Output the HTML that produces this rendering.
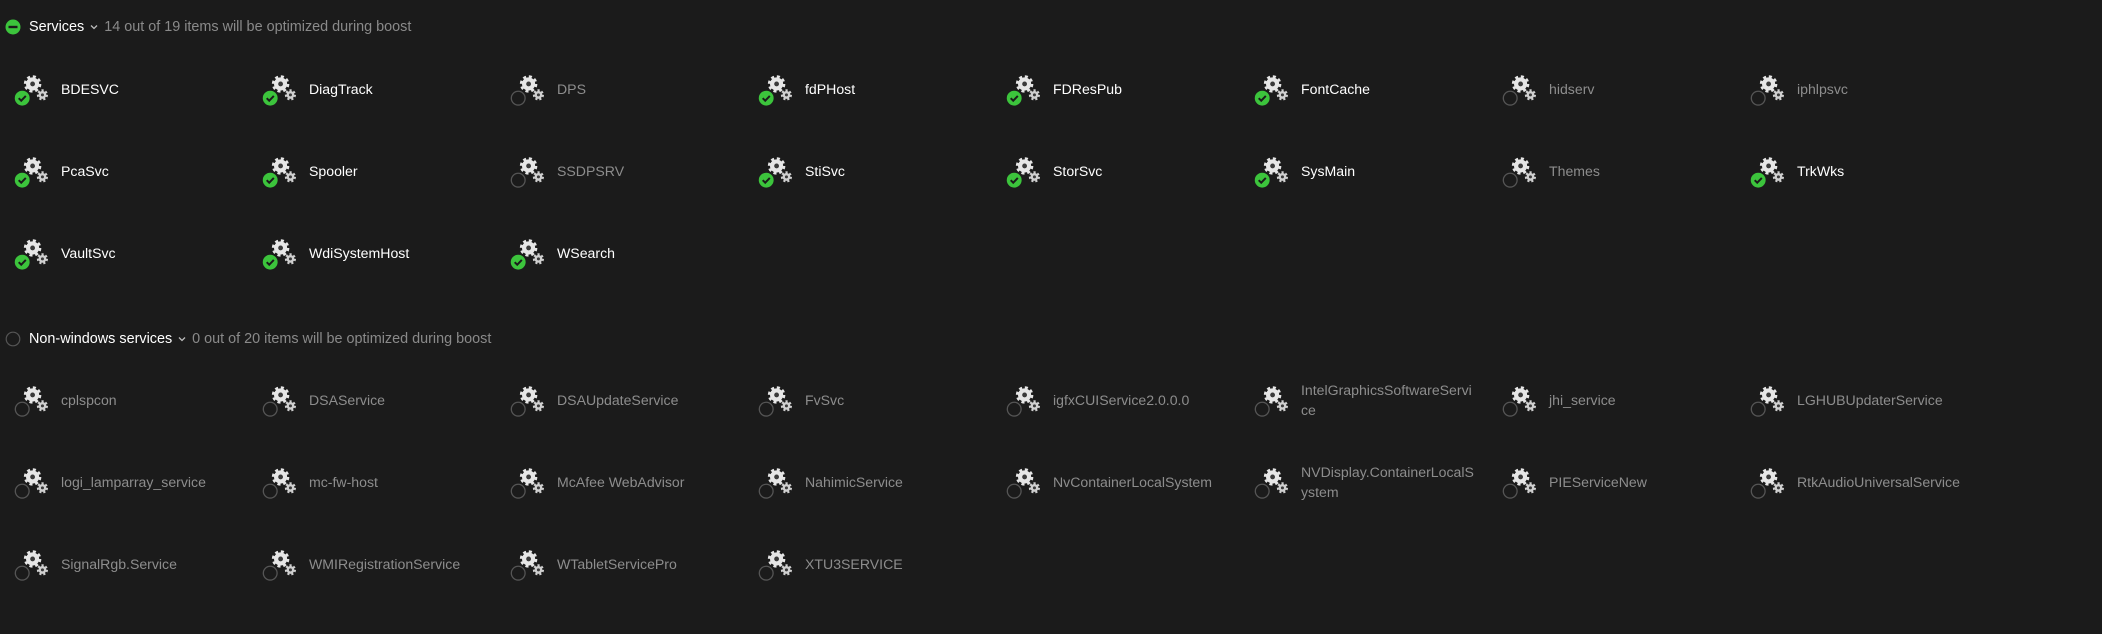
<!DOCTYPE html><html><head><meta charset="utf-8"><style>
body{margin:0;width:2102px;height:634px;background:#1b1b1b;font-family:"Liberation Sans",sans-serif;position:relative;overflow:hidden}
.h{position:absolute;left:5px;font-size:14.4px;color:#fff;display:flex;align-items:center;white-space:nowrap}
.h .s{color:#8a8a8a;margin-left:6px}
.h .c{margin-left:6px}
.i{position:absolute;width:248px;height:40px}
.i svg{position:absolute;left:14px;top:-15px}
.i span{position:absolute;left:61px;top:-10px;font-size:14.1px;line-height:20px;width:200px;white-space:nowrap;color:#fff}
.i.off span{color:#8d8d8d}
</style></head><body>
<svg width="0" height="0" style="position:absolute"><defs>
<symbol id="g" viewBox="0 0 32 30">
<circle cx="17" cy="9" r="6.3" fill="none" stroke="#e6e6e6" stroke-width="3.4" stroke-dasharray="2.6 2.35"/>
<circle cx="17" cy="9" r="6" fill="#e6e6e6"/><circle cx="17" cy="9" r="2.2" fill="#3a3a3a"/>
<circle cx="26" cy="19" r="3.8" fill="none" stroke="#d0d0d0" stroke-width="2.6" stroke-dasharray="1.8 1.6"/>
<circle cx="26" cy="19" r="3.6" fill="#d0d0d0"/><circle cx="26" cy="19" r="1.4" fill="#3a3a3a"/>
</symbol>
<symbol id="on" viewBox="0 0 32 30"><use href="#g"/><circle cx="7.5" cy="22" r="6.8" fill="#3cc43c"/><path d="M4.3 22l2.3 2.3 4.2-4.3" fill="none" stroke="#1b1b1b" stroke-width="1.8"/></symbol>
<symbol id="off" viewBox="0 0 32 30"><use href="#g"/><circle cx="7.5" cy="22" r="6.3" fill="#1b1b1b" stroke="#555" stroke-width="1.2"/></symbol>
</defs></svg>

<div class="h" style="top:19px"><svg width="16" height="16"><circle cx="8" cy="8" r="7.5" fill="#3cc43c"/><rect x="3.5" y="6.8" width="9" height="2.4" fill="#1b1b1b"/></svg><span style="margin-left:8px">Services</span><svg class="c" width="8" height="6"><path d="M1 1.5l3 3 3-3" fill="none" stroke="#bbb" stroke-width="1.3"/></svg><span class="s">14 out of 19 items will be optimized during boost</span></div>

<div class="i" style="left:0;top:89px"><svg width="35" height="33"><use href="#on"/></svg><span>BDESVC</span></div>
<div class="i" style="left:248px;top:89px"><svg width="35" height="33"><use href="#on"/></svg><span>DiagTrack</span></div>
<div class="i off" style="left:496px;top:89px"><svg width="35" height="33"><use href="#off"/></svg><span>DPS</span></div>
<div class="i" style="left:744px;top:89px"><svg width="35" height="33"><use href="#on"/></svg><span>fdPHost</span></div>
<div class="i" style="left:992px;top:89px"><svg width="35" height="33"><use href="#on"/></svg><span>FDResPub</span></div>
<div class="i" style="left:1240px;top:89px"><svg width="35" height="33"><use href="#on"/></svg><span>FontCache</span></div>
<div class="i off" style="left:1488px;top:89px"><svg width="35" height="33"><use href="#off"/></svg><span>hidserv</span></div>
<div class="i off" style="left:1736px;top:89px"><svg width="35" height="33"><use href="#off"/></svg><span>iphlpsvc</span></div>

<div class="i" style="left:0;top:171px"><svg width="35" height="33"><use href="#on"/></svg><span>PcaSvc</span></div>
<div class="i" style="left:248px;top:171px"><svg width="35" height="33"><use href="#on"/></svg><span>Spooler</span></div>
<div class="i off" style="left:496px;top:171px"><svg width="35" height="33"><use href="#off"/></svg><span>SSDPSRV</span></div>
<div class="i" style="left:744px;top:171px"><svg width="35" height="33"><use href="#on"/></svg><span>StiSvc</span></div>
<div class="i" style="left:992px;top:171px"><svg width="35" height="33"><use href="#on"/></svg><span>StorSvc</span></div>
<div class="i" style="left:1240px;top:171px"><svg width="35" height="33"><use href="#on"/></svg><span>SysMain</span></div>
<div class="i off" style="left:1488px;top:171px"><svg width="35" height="33"><use href="#off"/></svg><span>Themes</span></div>
<div class="i" style="left:1736px;top:171px"><svg width="35" height="33"><use href="#on"/></svg><span>TrkWks</span></div>

<div class="i" style="left:0;top:253px"><svg width="35" height="33"><use href="#on"/></svg><span>VaultSvc</span></div>
<div class="i" style="left:248px;top:253px"><svg width="35" height="33"><use href="#on"/></svg><span>WdiSystemHost</span></div>
<div class="i" style="left:496px;top:253px"><svg width="35" height="33"><use href="#on"/></svg><span>WSearch</span></div>

<div class="h" style="top:331px"><svg width="16" height="16"><circle cx="8" cy="8" r="6.8" fill="none" stroke="#555" stroke-width="1.2"/></svg><span style="margin-left:8px">Non-windows services</span><svg class="c" width="8" height="6"><path d="M1 1.5l3 3 3-3" fill="none" stroke="#bbb" stroke-width="1.3"/></svg><span class="s">0 out of 20 items will be optimized during boost</span></div>

<div class="i off" style="left:0;top:400px"><svg width="35" height="33"><use href="#off"/></svg><span>cplspcon</span></div>
<div class="i off" style="left:248px;top:400px"><svg width="35" height="33"><use href="#off"/></svg><span>DSAService</span></div>
<div class="i off" style="left:496px;top:400px"><svg width="35" height="33"><use href="#off"/></svg><span>DSAUpdateService</span></div>
<div class="i off" style="left:744px;top:400px"><svg width="35" height="33"><use href="#off"/></svg><span>FvSvc</span></div>
<div class="i off" style="left:992px;top:400px"><svg width="35" height="33"><use href="#off"/></svg><span>igfxCUIService2.0.0.0</span></div>
<div class="i off" style="left:1240px;top:400px"><svg width="35" height="33"><use href="#off"/></svg><span style="top:-20px">IntelGraphicsSoftwareServi<br>ce</span></div>
<div class="i off" style="left:1488px;top:400px"><svg width="35" height="33"><use href="#off"/></svg><span>jhi_service</span></div>
<div class="i off" style="left:1736px;top:400px"><svg width="35" height="33"><use href="#off"/></svg><span>LGHUBUpdaterService</span></div>

<div class="i off" style="left:0;top:482px"><svg width="35" height="33"><use href="#off"/></svg><span>logi_lamparray_service</span></div>
<div class="i off" style="left:248px;top:482px"><svg width="35" height="33"><use href="#off"/></svg><span>mc-fw-host</span></div>
<div class="i off" style="left:496px;top:482px"><svg width="35" height="33"><use href="#off"/></svg><span>McAfee WebAdvisor</span></div>
<div class="i off" style="left:744px;top:482px"><svg width="35" height="33"><use href="#off"/></svg><span>NahimicService</span></div>
<div class="i off" style="left:992px;top:482px"><svg width="35" height="33"><use href="#off"/></svg><span>NvContainerLocalSystem</span></div>
<div class="i off" style="left:1240px;top:482px"><svg width="35" height="33"><use href="#off"/></svg><span style="top:-20px">NVDisplay.ContainerLocalS<br>ystem</span></div>
<div class="i off" style="left:1488px;top:482px"><svg width="35" height="33"><use href="#off"/></svg><span>PIEServiceNew</span></div>
<div class="i off" style="left:1736px;top:482px"><svg width="35" height="33"><use href="#off"/></svg><span>RtkAudioUniversalService</span></div>

<div class="i off" style="left:0;top:564px"><svg width="35" height="33"><use href="#off"/></svg><span>SignalRgb.Service</span></div>
<div class="i off" style="left:248px;top:564px"><svg width="35" height="33"><use href="#off"/></svg><span>WMIRegistrationService</span></div>
<div class="i off" style="left:496px;top:564px"><svg width="35" height="33"><use href="#off"/></svg><span>WTabletServicePro</span></div>
<div class="i off" style="left:744px;top:564px"><svg width="35" height="33"><use href="#off"/></svg><span>XTU3SERVICE</span></div>
</body></html>
